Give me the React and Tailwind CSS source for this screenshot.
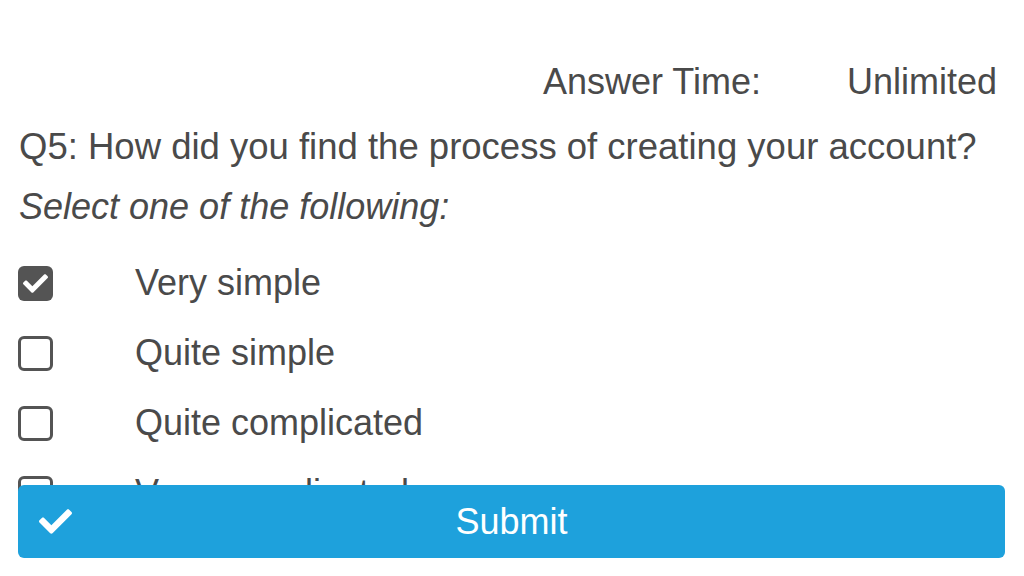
import React, { useState } from "react";
import { FaCheck } from "react-icons/fa";

const options = ["Very simple", "Quite simple", "Quite complicated", "Very complicated"];

export default function App() {
  const [selected, setSelected] = useState(0);

  return (
    <div className="relative h-[576px] w-[1024px] overflow-hidden bg-white font-['Liberation_Sans',Arial,sans-serif] text-[#4a4a4a]">
      <div className="px-[18px] pt-[62px] text-[36px] leading-[40px]">
        <div className="flex justify-end pr-[9px]">
          <span>Answer Time:</span>
          <span className="ml-[86px]">Unlimited</span>
        </div>
        <div className="mt-[25px] pl-[1px] text-[36.5px]">
          Q5: How did you find the process of creating your account?
        </div>
        <div className="mt-[20px] pl-[1px] italic">Select one of the following:</div>

        <ul className="mt-[21px]">
          {options.map((opt, i) => (
            <li
              key={opt}
              className="flex h-[70px] cursor-pointer items-center"
              onClick={() => setSelected(i)}
            >
              <div className="w-[117px]">
                {selected === i ? (
                  <div className="flex h-[35px] w-[35px] items-center justify-center rounded-[6px] bg-[#545454]">
                    <FaCheck className="h-[25px] w-[25px] text-white" />
                  </div>
                ) : (
                  <div className="h-[35px] w-[35px] rounded-[6px] border-[3px] border-[#545454]" />
                )}
              </div>
              <span>{opt}</span>
            </li>
          ))}
        </ul>
      </div>

      <button className="absolute bottom-[18px] left-[18px] right-[19px] flex h-[73px] items-center rounded-[6px] bg-[#1ea1dc] text-white">
        <FaCheck className="ml-[21px] h-[33px] w-[33px]" />
        <span className="flex-1 pr-[54px] text-center text-[36px] leading-[40px]">Submit</span>
      </button>
    </div>
  );
}
